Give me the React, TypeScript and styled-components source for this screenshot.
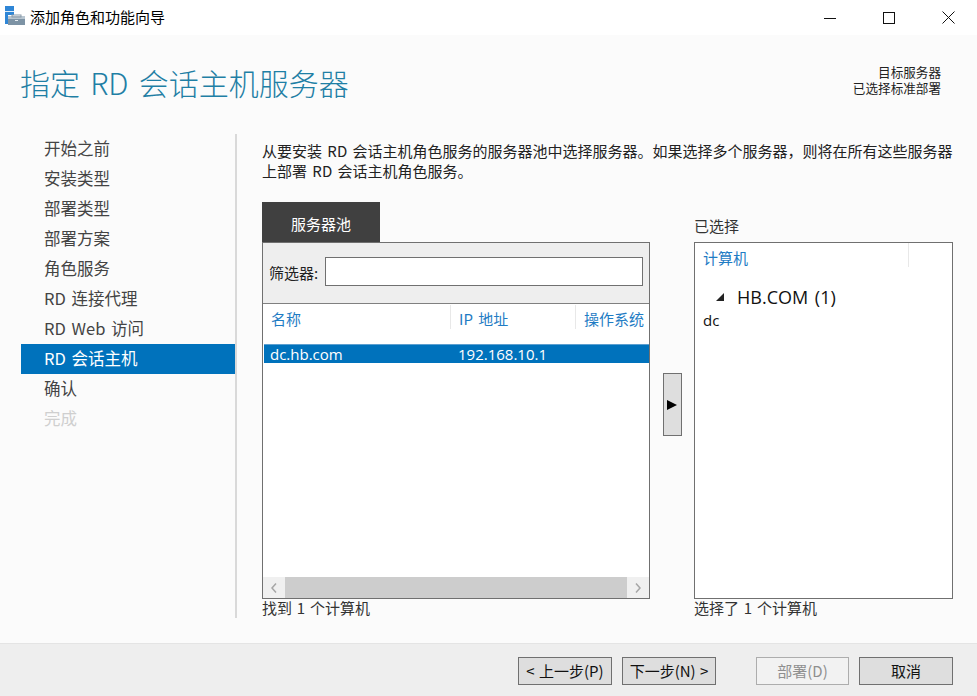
import React from "react";
import styled, { createGlobalStyle } from "styled-components";

const FONT = `"Noto Sans CJK SC", "Noto Sans", sans-serif`;

const Global = createGlobalStyle`
  html, body { margin: 0; padding: 0; background: #fbfbfb; }
  * { box-sizing: border-box; }
  body { font-family: ${FONT}; color: #333; }
`;

const Wizard = styled.div`
  width: 977px;
  height: 696px;
  display: flex;
  flex-direction: column;
  overflow: hidden;
  background: #fbfbfb;
`;

const TitleBar = styled.div`
  height: 35px;
  flex: none;
  background: #fff;
  display: flex;
  align-items: center;
  padding-left: 5px;
`;

const IconSlot = styled.div`
  width: 20px;
  height: 20px;
  margin-top: -5px;
  flex: none;
  display: flex;
`;

const WindowTitle = styled.div`
  font-size: 15px;
  color: #000;
  margin-left: 5px;
  margin-top: -2px;
  flex: 1;
  line-height: 35px;
`;

const WindowControls = styled.div`
  display: flex;
  align-items: center;
  padding-right: 22px;
  gap: 47px;
`;

const Header = styled.div`
  height: 99px;
  flex: none;
  display: flex;
  justify-content: space-between;
  padding: 25px 36px 0 20px;
`;

const PageTitle = styled.h1`
  margin: 0;
  font-size: 30px;
  font-weight: 300;
  line-height: 44px;
  word-spacing: 3.5px;
  color: #1f7fa5;
`;

const TargetInfo = styled.div`
  font-size: 12.6px;
  color: #222;
  text-align: right;
  margin-top: 4px;
`;

const TargetLine = styled.div`
  height: 16px;
  line-height: 16px;
`;

const Body = styled.div`
  flex: 1;
  display: flex;
  min-height: 0;
`;

const Sidebar = styled.nav`
  width: 237px;
  flex: none;
  padding-left: 21px;
  border-right: 2px solid #d9d9d9;
  margin-bottom: 25px;
`;

const NavItem = styled.div<{ $active?: boolean; $disabled?: boolean }>`
  width: 214px;
  height: 30px;
  padding-left: 23px;
  font-size: 16.5px;
  line-height: 28px;
  word-spacing: 2px;
  color: ${(p) => (p.$active ? "#fff" : p.$disabled ? "#cfcfcf" : "#444")};
  background: ${(p) => (p.$active ? "#0072bc" : "transparent")};
`;

const Main = styled.main`
  flex: 1;
  min-width: 0;
  padding: 7px 24px 0 25px;
  display: flex;
  flex-direction: column;
`;

const Description = styled.p`
  margin: 0;
  height: 61px;
  font-size: 15px;
  line-height: 20px;
  word-spacing: 2px;
  color: #222;
`;

const Columns = styled.div`
  display: flex;
  align-items: stretch;
`;

const LeftColumn = styled.section`
  width: 388px;
  flex: none;
`;

const Tab = styled.div`
  width: 118px;
  height: 40px;
  background: #404040;
  color: #fff;
  font-size: 15px;
  line-height: 44px;
  text-align: center;
`;

const PoolPanel = styled.div`
  height: 357px;
  border: 1px solid #707070;
  background: #fff;
  display: flex;
  flex-direction: column;
`;

const FilterBar = styled.div`
  height: 61px;
  flex: none;
  background: #eeeeee;
  border-bottom: 1px solid #808080;
  display: flex;
  align-items: center;
  padding: 0 6px;
  gap: 7px;
`;

const FilterLabel = styled.span`
  font-size: 15px;
  color: #222;
  margin-top: -1px;
`;

const FilterInput = styled.div`
  flex: 1;
  height: 29px;
  background: #fff;
  border: 1px solid #707070;
  margin-top: -3px;
`;

const ColumnHeader = styled.div`
  height: 40px;
  flex: none;
  display: flex;
  padding-top: 1px;
`;

const HeaderCell = styled.div<{ $w: number; $sep?: boolean }>`
  width: ${(p) => p.$w}px;
  flex: none;
  height: 24px;
  padding-left: 8px;
  font-size: 15px;
  line-height: 27px;
  white-space: nowrap;
  word-spacing: 2px;
  color: #1f7cc4;
  border-right: ${(p) => (p.$sep ? "1px solid #e8e8e8" : "none")};
`;

const SelectedRow = styled.div`
  height: 19px;
  flex: none;
  background: #0072bc;
  color: #fff;
  display: flex;
  font-family: "Open Sans", sans-serif;
  font-size: 15px;
  line-height: 19px;
  border-top: 1px solid #5c9fd0;
  margin-left: 1px;
`;

const RowName = styled.span`
  width: 194px;
  padding-left: 6px;
`;

const RowIp = styled.span``;

const ListFill = styled.div`
  flex: 1;
`;

const Scrollbar = styled.div`
  height: 21px;
  flex: none;
  display: flex;
  background: #f0f0f0;
`;

const ScrollEnd = styled.div`
  width: 22px;
  flex: none;
  display: flex;
  align-items: center;
  justify-content: center;
`;

const ScrollThumb = styled.div`
  flex: 1;
  background: #cdcdcd;
`;

const CountText = styled.div`
  font-size: 15px;
  line-height: 18px;
  word-spacing: 1.5px;
  color: #333;
`;

const ArrowColumn = styled.div`
  width: 44px;
  flex: none;
  display: flex;
  justify-content: center;
  align-items: flex-start;
  padding-top: 171px;
`;

const ArrowButton = styled.div`
  width: 19px;
  height: 63px;
  background: #dedede;
  border: 1px solid #707070;
  display: flex;
  align-items: center;
  justify-content: center;
`;

const RightColumn = styled.section`
  width: 259px;
  flex: none;
`;

const SelectedLabel = styled.div`
  height: 40px;
  font-size: 15px;
  line-height: 48px;
  color: #333;
`;

const SelectedPanel = styled.div`
  height: 357px;
  background: #fff;
  border: 1px solid #707070;
`;

const ComputerHeader = styled.div`
  width: 214px;
  height: 24px;
  padding-left: 8px;
  font-size: 15px;
  line-height: 29px;
  color: #1f7cc4;
  border-right: 1px solid #e8e8e8;
`;

const GroupRow = styled.div`
  display: flex;
  align-items: center;
  height: 26px;
  margin-top: 17px;
  padding-left: 21px;
  font-family: "Open Sans", sans-serif;
  font-size: 18px;
  word-spacing: 2px;
  color: #111;
  gap: 12px;
`;

const LeafRow = styled.div`
  padding-left: 8px;
  font-family: "Open Sans", sans-serif;
  font-size: 15px;
  line-height: 18px;
  margin-top: 1px;
  color: #111;
`;

const Footer = styled.footer`
  height: 53px;
  flex: none;
  background: #eeeeee;
  border-top: 1px solid #e4e4e4;
  display: flex;
  align-items: center;
  justify-content: flex-end;
  padding: 0 24px 0 0;
`;

const WizardButton = styled.div<{ $disabled?: boolean; $gapLeft?: number }>`
  width: ${(p) => (p.$disabled ? 93 : 94)}px;
  height: 28px;
  margin-left: ${(p) => p.$gapLeft ?? 10}px;
  margin-top: 1px;
  background: ${(p) => (p.$disabled ? "#f2f2f2" : "#dedede")};
  border: 1px solid ${(p) => (p.$disabled ? "#adadad" : "#707070")};
  color: ${(p) => (p.$disabled ? "#8f8f8f" : "#111")};
  font-size: 15px;
  line-height: 25px;
  word-spacing: 1px;
  text-align: center;
  white-space: nowrap;
`;

const NAV = ["开始之前", "安装类型", "部署类型", "部署方案", "角色服务", "RD 连接代理", "RD Web 访问", "RD 会话主机", "确认", "完成"];

const Chevron = ({ dir }: { dir: "l" | "r" }) => (
  <svg width="8" height="12" viewBox="0 0 8 12">
    <path d={dir === "l" ? "M6 1.5 L2 6 L6 10.5" : "M2 1.5 L6 6 L2 10.5"} fill="none" stroke="#a6a6a6" strokeWidth="1.5" />
  </svg>
);

const AppIcon = () => (
  <svg width="20" height="20" viewBox="0 0 20 20">
    <rect x="0" y="1" width="9" height="18" fill="#2f86d6" />
    <rect x="0" y="6" width="9" height="1" fill="#dfeefa" />
    <rect x="3" y="10" width="17" height="10" fill="#fff" />
    <rect x="3" y="11" width="17" height="9" fill="#7d93a5" />
    <rect x="3" y="11" width="17" height="3" fill="#b9c6d1" />
    <rect x="7" y="10" width="9" height="2" fill="none" stroke="#8a9aa8" strokeWidth="1" />
    <rect x="10" y="15" width="3" height="1" fill="#e6ecf1" />
  </svg>
);

export default function App() {
  return (
    <Wizard>
      <Global />
      <TitleBar>
        <IconSlot><AppIcon /></IconSlot>
        <WindowTitle>添加角色和功能向导</WindowTitle>
        <WindowControls>
          <svg width="12" height="12" viewBox="0 0 12 12"><path d="M0 6.5H12" stroke="#111" strokeWidth="1" /></svg>
          <svg width="12" height="12" viewBox="0 0 12 12"><rect x="0.5" y="0.5" width="11" height="11" fill="none" stroke="#111" /></svg>
          <svg width="13" height="13" viewBox="0 0 13 13"><path d="M0.5 0.5L12.5 12.5M12.5 0.5L0.5 12.5" stroke="#111" strokeWidth="1" /></svg>
        </WindowControls>
      </TitleBar>
      <Header>
        <PageTitle>指定 RD 会话主机服务器</PageTitle>
        <TargetInfo>
          <TargetLine>目标服务器</TargetLine>
          <TargetLine>已选择标准部署</TargetLine>
        </TargetInfo>
      </Header>
      <Body>
        <Sidebar>
          {NAV.map((n, i) => (
            <NavItem key={n} $active={i === 7} $disabled={i === 9}>{n}</NavItem>
          ))}
        </Sidebar>
        <Main>
          <Description>
            从要安装 RD 会话主机角色服务的服务器池中选择服务器。如果选择多个服务器，则将在所有这些服务器上部署 RD 会话主机角色服务。
          </Description>
          <Columns>
            <LeftColumn>
              <Tab>服务器池</Tab>
              <PoolPanel>
                <FilterBar>
                  <FilterLabel>筛选器:</FilterLabel>
                  <FilterInput />
                </FilterBar>
                <ColumnHeader>
                  <HeaderCell $w={188} $sep>名称</HeaderCell>
                  <HeaderCell $w={125} $sep>IP 地址</HeaderCell>
                  <HeaderCell $w={73}>操作系统</HeaderCell>
                </ColumnHeader>
                <SelectedRow>
                  <RowName>dc.hb.com</RowName>
                  <RowIp>192.168.10.1</RowIp>
                </SelectedRow>
                <ListFill />
                <Scrollbar>
                  <ScrollEnd><Chevron dir="l" /></ScrollEnd>
                  <ScrollThumb />
                  <ScrollEnd><Chevron dir="r" /></ScrollEnd>
                </Scrollbar>
              </PoolPanel>
              <CountText>找到 1 个计算机</CountText>
            </LeftColumn>
            <ArrowColumn>
              <ArrowButton>
                <svg width="10" height="10" viewBox="0 0 10 10"><path d="M0 0L10 5L0 10Z" fill="#000" /></svg>
              </ArrowButton>
            </ArrowColumn>
            <RightColumn>
              <SelectedLabel>已选择</SelectedLabel>
              <SelectedPanel>
                <ComputerHeader>计算机</ComputerHeader>
                <GroupRow>
                  <svg width="9" height="9" viewBox="0 0 9 9"><path d="M8 0V8H0Z" fill="#222" /></svg>
                  <span>HB.COM (1)</span>
                </GroupRow>
                <LeafRow>dc</LeafRow>
              </SelectedPanel>
              <CountText>选择了 1 个计算机</CountText>
            </RightColumn>
          </Columns>
        </Main>
      </Body>
      <Footer>
        <WizardButton>&lt; 上一步(P)</WizardButton>
        <WizardButton>下一步(N) &gt;</WizardButton>
        <WizardButton $disabled $gapLeft={40}>部署(D)</WizardButton>
        <WizardButton>取消</WizardButton>
      </Footer>
    </Wizard>
  );
}
